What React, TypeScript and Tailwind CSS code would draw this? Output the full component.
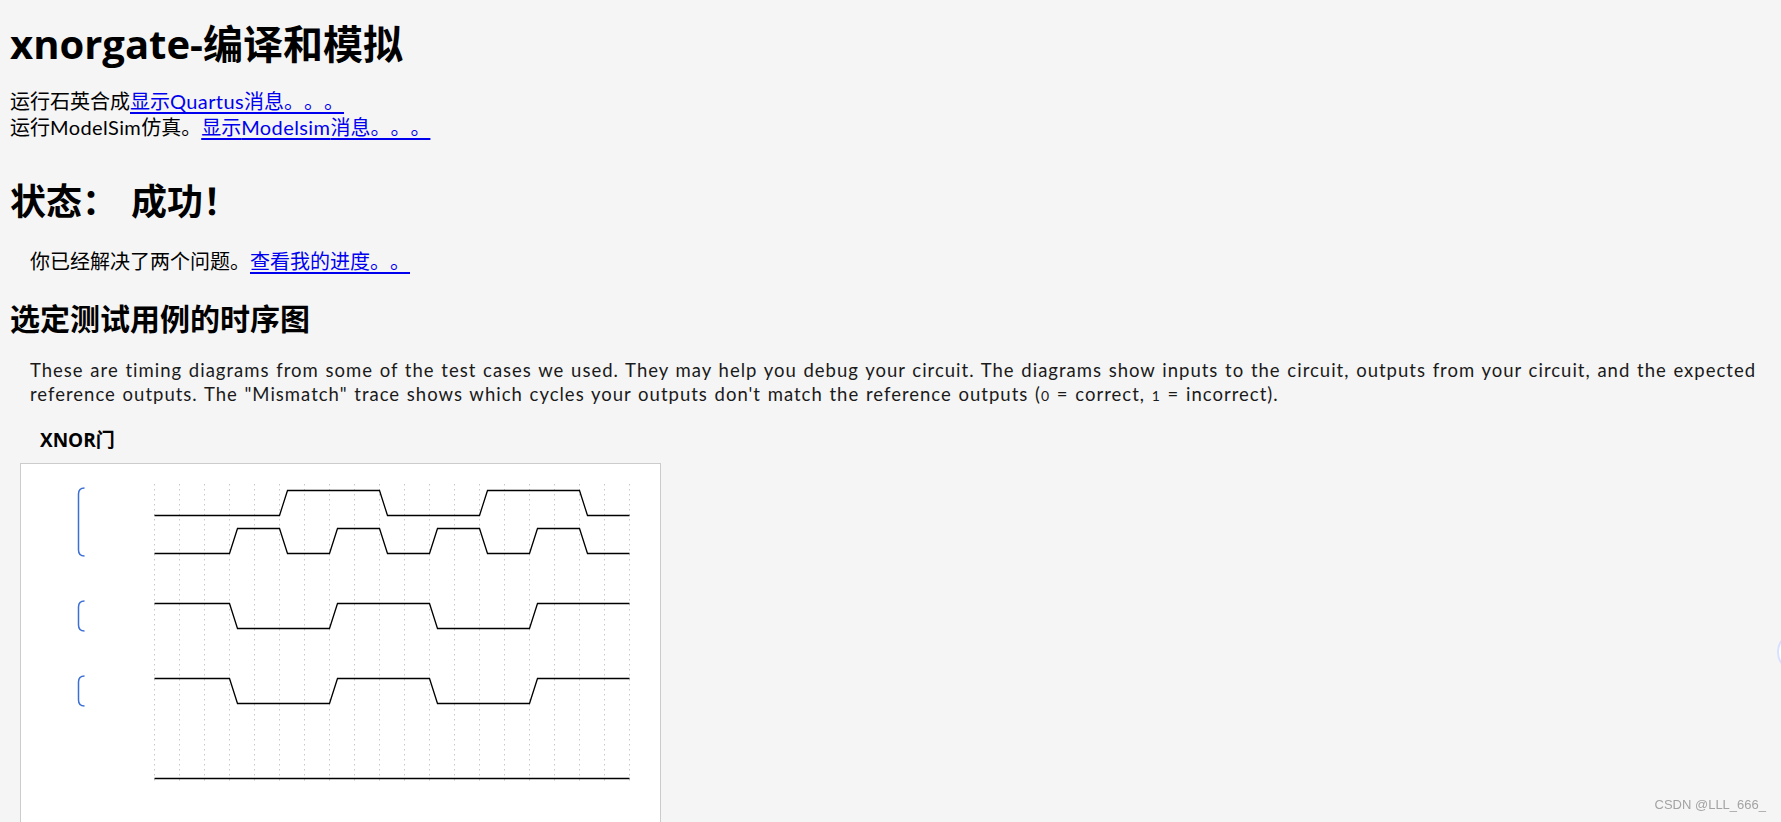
import React from 'react';

const X0 = 133.5;
const U = 25;
const T = 8;

const A = [0, 0, 0, 0, 0, 1, 1, 1, 1, 0, 0, 0, 0, 1, 1, 1, 1, 0, 0];
const B = [0, 0, 0, 1, 1, 0, 0, 1, 1, 0, 0, 1, 1, 0, 0, 1, 1, 0, 0];
const OUT = A.map((a, i) => (a === B[i] ? 1 : 0));

function wavePath(bits: number[], hi: number, lo: number) {
  const y = (b: number) => (b ? hi : lo);
  let d = `M ${X0} ${y(bits[0])}`;
  for (let i = 1; i < bits.length; i++) {
    if (bits[i] !== bits[i - 1]) {
      const x = X0 + i * U;
      d += ` L ${x} ${y(bits[i - 1])} L ${x + T} ${y(bits[i])}`;
    }
  }
  d += ` L ${X0 + bits.length * U} ${y(bits[bits.length - 1])}`;
  return d;
}

function Bracket({ top, bottom }: { top: number; bottom: number }) {
  const x = 57.5;
  return (
    <path
      d={`M ${x + 6} ${top} Q ${x} ${top} ${x} ${top + 6} L ${x} ${bottom - 6} Q ${x} ${bottom} ${x + 6} ${bottom}`}
      fill="none"
      stroke="#3b6fd4"
      strokeWidth="1.5"
    />
  );
}

function TimingDiagram() {
  const grid = Array.from({ length: 20 }, (_, i) => X0 + i * U);
  return (
    <svg width="639" height="418" viewBox="0 0 639 418">
      {grid.map((x) => (
        <line key={x} x1={x} y1={20} x2={x} y2={318} stroke="#c8c8c8" strokeWidth="1" strokeDasharray="1.5 3.5" />
      ))}
      <Bracket top={24} bottom={92} />
      <Bracket top={137} bottom={167} />
      <Bracket top={212} bottom={242} />
      <g fill="none" stroke="#000" strokeWidth="1.3">
        <path d={wavePath(A, 26.5, 51.5)} />
        <path d={wavePath(B, 64.5, 89.5)} />
        <path d={wavePath(OUT, 139.5, 164.5)} />
        <path d={wavePath(OUT, 214.5, 239.5)} />
        <path d={`M ${X0} 314.5 L ${X0 + 19 * U} 314.5`} />
      </g>
    </svg>
  );
}

// chinese runs get the CJK face so the full-width stops keep their width
function Zh({ children }: { children: React.ReactNode }) {
  return <span className="font-['Noto_Sans_CJK_SC',sans-serif] tracking-normal">{children}</span>;
}

const head = "font-['Open_Sans','Noto_Sans_CJK_SC',sans-serif] font-bold";
const link = 'text-[#0000ee] underline decoration-2 underline-offset-[3px]';

export default function App() {
  return (
    <div className="relative min-h-screen overflow-hidden bg-[#f5f5f5] px-[10px] pt-[20px] font-['Lato','Noto_Sans_CJK_SC',sans-serif] text-black [text-spacing-trim:space-all]">
      <h1 className={`${head} text-[40px] leading-[48px]`}>xnorgate-编译和模拟</h1>

      <div className="mt-[20px] text-[20px] leading-[25px] tracking-[0.4px]">
        <div>
          <Zh>运行石英合成</Zh>
          <a href="#" className={link}>
            <Zh>显示</Zh>Quartus<Zh>消息。。。</Zh>
          </a>
        </div>
        <div>
          <Zh>运行</Zh>ModelSim<Zh>仿真。</Zh>
          <a href="#" className={link}>
            <Zh>显示</Zh>Modelsim<Zh>消息。。。</Zh>
          </a>
        </div>
      </div>

      <h1 className={`${head} mt-[40px] text-[36px] leading-[44px]`}>
        状态<span className="mr-[13px]">：</span>成功！
      </h1>

      <p className="mt-[24px] pl-[20px] text-[20px] leading-[25px]">
        <Zh>你已经解决了两个问题。</Zh>
        <a href="#" className={link}>
          <Zh>查看我的进度。。</Zh>
        </a>
      </p>

      <h2 className={`${head} mt-[27px] text-[30px] leading-[36px]`}>选定测试用例的时序图</h2>

      <p className="mt-[21px] whitespace-nowrap pl-[20px] text-[18.5px] leading-[24px] tracking-[1px] [word-spacing:1px] text-[#1a1a1a]">
        These are timing diagrams from some of the test cases we used. They may help you debug your circuit. The diagrams show inputs to the circuit, outputs from your circuit, and the expected
        <br />
        reference outputs. The "Mismatch" trace shows which cycles your outputs don't match the reference outputs (<span className="text-[14px]">0</span> = correct, <span className="text-[14px]">1</span> = incorrect).
      </p>

      <h3 className={`${head} mt-[20px] pl-[30px] text-[19px] leading-[24px]`}>XNOR门</h3>

      <div className="ml-[10px] mt-[11px] h-[420px] w-[641px] border border-[#cccccc] bg-white">
        <TimingDiagram />
      </div>

      <div className="absolute right-[-38px] top-[631px] h-[42px] w-[42px] rounded-full border-2 border-[#d5e1ff] bg-white" />
      <div className="fixed bottom-[8px] right-[15px] font-['Liberation_Sans',sans-serif] text-[13px] text-[#a3a3a3]">
        CSDN @LLL_666_
      </div>
    </div>
  );
}
